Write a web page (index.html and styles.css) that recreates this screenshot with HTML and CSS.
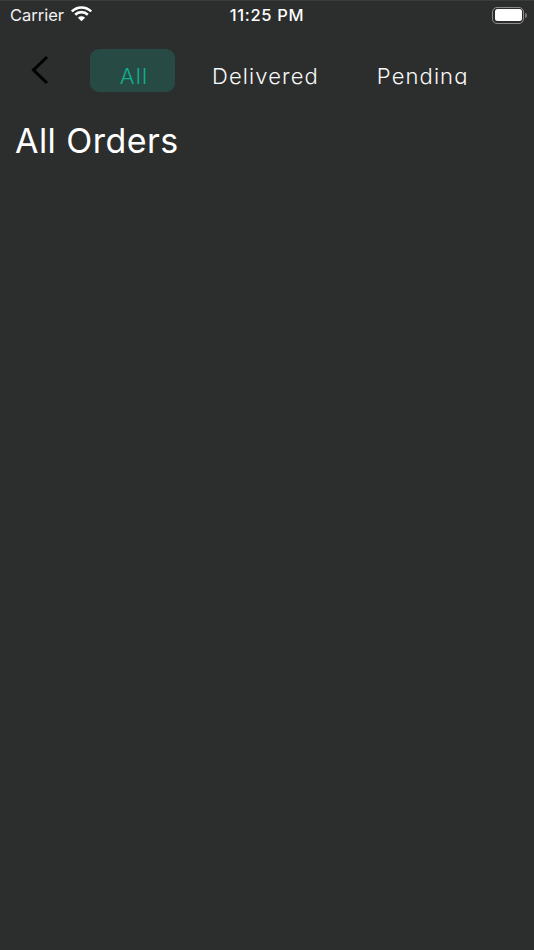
FILE: index.html
```html
<!DOCTYPE html>
<html lang="en">
<head>
<meta charset="utf-8">
<title>All Orders</title>
<link rel="stylesheet" href="styles.css">
</head>
<body>
<div class="screen">
  <header class="status">
    <div class="status-left">
      <span class="carrier">Carrier</span>
      <svg class="wifi" viewBox="0 4.500 20 15" width="21" height="16"><path d="M10 19 6.600 15.600A4.800 4.800 0 0 1 13.400 15.600Z" fill="#fff"/><path d="M4 12.700A8.500 8.500 0 0 1 16 12.700" fill="none" stroke="#fff" stroke-width="2.400"/><path d="M.8 9.600A13 13 0 0 1 19.200 9.600" fill="none" stroke="#fff" stroke-width="2.400"/></svg>
    </div>
    <span class="time">11:25 PM</span>
    <div class="battery"><span class="battery-body"><span class="battery-fill"></span></span><span class="battery-cap"></span></div>
  </header>
  <nav class="nav">
    <button class="back" aria-label="Back"><svg viewBox="0 0 20 30" width="20" height="30"><path d="M17 2 3.500 15 17 28" fill="none" stroke="#000" stroke-width="3"/></svg></button>
    <div class="tabs">
      <div class="tab active"><span class="label">All</span></div>
      <div class="tab"><span class="label">Delivered</span></div>
      <div class="tab"><span class="label">Pending</span></div>
    </div>
  </nav>
  <h1 class="title">All Orders</h1>
</div>
</body>
</html>
```
FILE: styles.css
```css
* { box-sizing: border-box; }
html, body { margin: 0; height: 100%; }
body { background: #2c2e2d; font-family: Inter, "Liberation Sans", sans-serif; color: #fff; }
.screen { width: 534px; height: 950px; overflow: hidden; display: flex; flex-direction: column; border-top: 1px solid #3a3b3a; }
.status { height: 28px; display: flex; align-items: center; justify-content: space-between; position: relative; padding: 0 7px 0 10px; flex: none; }
.status-left { display: flex; align-items: center; gap: 7px; }
.carrier { font-size: 16.500px; color: #f2f2f2; }
.wifi { display: block; margin-top: -2px; }
.time { position: absolute; left: 0; right: 0; text-align: center; font-size: 16.500px; font-weight: 500; letter-spacing: .65px; }
.battery { display: flex; align-items: center; gap: 1px; }
.battery-body { width: 32px; height: 17px; border: 1.500px solid #8c8c8c; border-radius: 5px; padding: 1.500px; display: block; }
.battery-fill { display: block; height: 100%; background: #fff; border-radius: 2.500px; }
.battery-cap { width: 2px; height: 5px; background: #777; border-radius: 0 2px 2px 0; }
.nav { display: flex; align-items: flex-start; height: 63px; flex: none; padding-left: 30px; padding-top: 20px; }
.back { background: none; border: 0; padding: 0; width: 20px; height: 30px; margin-top: 6px; }
.back svg { display: block; }
.tabs { display: flex; margin-left: 40px; align-items: flex-start; flex: none; }
.tab { flex: none; height: 43px; padding-top: 15px; margin-right: 58px; font-size: 22px; letter-spacing: 1.100px; font-weight: 300; color: #f8f8f8; }
.label { display: block; height: 21px; line-height: 24px; overflow: hidden; }
.tab.active { width: 85px; margin-right: 37px; padding-left: 3px; text-align: center; background: #274b44; color: #0fb08f; border-radius: 9px; }
.title { margin: 29px 0 0; padding-left: 15px; font-size: 34px; line-height: 40px; font-weight: 400; letter-spacing: .45px; }
```
